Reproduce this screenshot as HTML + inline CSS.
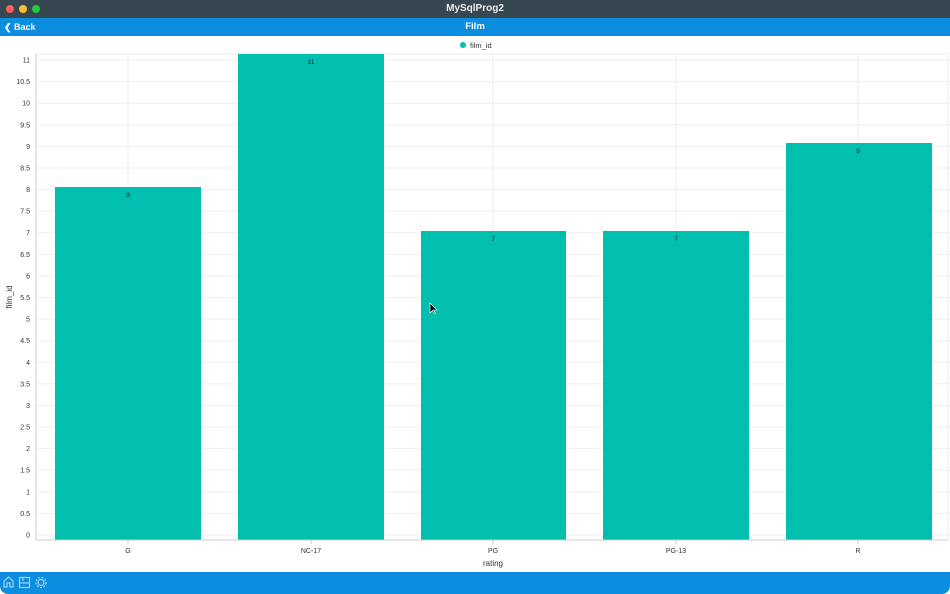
<!DOCTYPE html>
<html><head><meta charset="utf-8"><style>
*{margin:0;padding:0;box-sizing:border-box}
body{width:950px;height:594px;overflow:hidden;background:#fff;font-family:"Liberation Sans",sans-serif;position:relative}
.tb{position:absolute;left:0;top:0;width:950px;height:18px;background:#37474f;color:#e8eef0;font-size:10px;font-weight:bold;text-align:center;line-height:18px}
.dot{position:absolute;top:5px;width:8px;height:8px;border-radius:50%}
.nav{position:absolute;left:0;top:18px;width:950px;height:18px;background:#0b8ee0;color:#fff;font-size:9.5px;font-weight:bold;line-height:18px}
.bot{position:absolute;left:0;top:572px;width:950px;height:22px;background:#0b8ee0;border-bottom-left-radius:8px;border-bottom-right-radius:8px}
</style></head><body>
<div class="tb">MySqlProg2
<div class="dot" style="left:6px;background:#fe5f57"></div>
<div class="dot" style="left:19px;background:#febc2e"></div>
<div class="dot" style="left:32px;background:#28c840"></div>
</div>
<div class="nav"><span style="position:absolute;left:4px;font-size:9px">&#10094; Back</span><div style="text-align:center">Film</div></div>
<div class="bot"></div>
<svg width="950" height="594" style="position:absolute;left:0;top:0" font-family="Liberation Sans, sans-serif">
<circle cx="463" cy="45" r="3" fill="#00bfae"/>
<text x="470" y="48" font-size="7.5" fill="#333">film_id</text>
<g stroke="#ececec" stroke-width="1">
<line x1="36" y1="54" x2="948" y2="54"/>
<line x1="128" y1="54" x2="128" y2="540"/><line x1="311" y1="54" x2="311" y2="540"/><line x1="493" y1="54" x2="493" y2="540"/><line x1="676" y1="54" x2="676" y2="540"/><line x1="858" y1="54" x2="858" y2="540"/>
<line x1="948" y1="54" x2="948" y2="540"/>
</g>
<g stroke="#efefef" id="h"></g>
<g font-size="7" fill="#333" text-anchor="end" id="yl"></g>
<g fill="#00bfae">
<rect x="55" y="187" width="146" height="353"/>
<rect x="238" y="54" width="146" height="486"/>
<rect x="421" y="231" width="145" height="309"/>
<rect x="603" y="231" width="146" height="309"/>
<rect x="786" y="143" width="146" height="397"/>
</g>
<g font-size="6.5" fill="#222" text-anchor="middle">
<text x="128" y="197">8</text><text x="311" y="64">11</text><text x="493" y="241">7</text><text x="676" y="241">7</text><text x="858" y="153">9</text>
</g>
<line x1="36" y1="54" x2="36" y2="540" stroke="#ccc"/>
<line x1="36" y1="540" x2="948" y2="540" stroke="#ccc"/>
<g stroke="#ccc"><line x1="128" y1="540" x2="128" y2="544"/><line x1="311" y1="540" x2="311" y2="544"/><line x1="493" y1="540" x2="493" y2="544"/><line x1="676" y1="540" x2="676" y2="544"/><line x1="858" y1="540" x2="858" y2="544"/></g>
<g font-size="7" fill="#333" text-anchor="middle">
<text x="128" y="553">G</text><text x="311" y="553">NC-17</text><text x="493" y="553">PG</text><text x="676" y="553">PG-13</text><text x="858" y="553">R</text>
<text x="493" y="566" font-size="8">rating</text>
<text transform="translate(12,297) rotate(-90)" font-size="8">film_id</text>
</g>
<path d="M430 303 L430 313 L432.5 310.5 L434.5 314 L435.5 313.5 L433.5 310 L437 310 Z" fill="#111" stroke="#fff" stroke-width="0.6"/>
<g fill="none" stroke="#9fd3f7" stroke-width="1.2">
<path d="M4 587 L4 581 L8.5 577 L13 581 L13 587 L10 587 L10 583 L7 583 L7 587 Z"/>
<rect x="19.5" y="577.5" width="10" height="10"/><line x1="19.5" y1="583" x2="29.5" y2="583"/><line x1="23" y1="577.5" x2="23" y2="581"/>
<circle cx="41" cy="582.5" r="3"/><circle cx="41" cy="582.5" r="5" stroke-dasharray="2 1.4"/>
</g>
</svg>
<script>
var h=document.getElementById('h'),yl=document.getElementById('yl'),ns='http://www.w3.org/2000/svg';
for(var i=0;i<=22;i++){var y=535-i*21.59;
var l=document.createElementNS(ns,'line');l.setAttribute('x1',36);l.setAttribute('x2',948);l.setAttribute('y1',y);l.setAttribute('y2',y);h.appendChild(l);
var t=document.createElementNS(ns,'text');t.setAttribute('x',30);t.setAttribute('y',y+2.5);t.textContent=(i/2).toString();yl.appendChild(t);}
</script>
</body></html>
